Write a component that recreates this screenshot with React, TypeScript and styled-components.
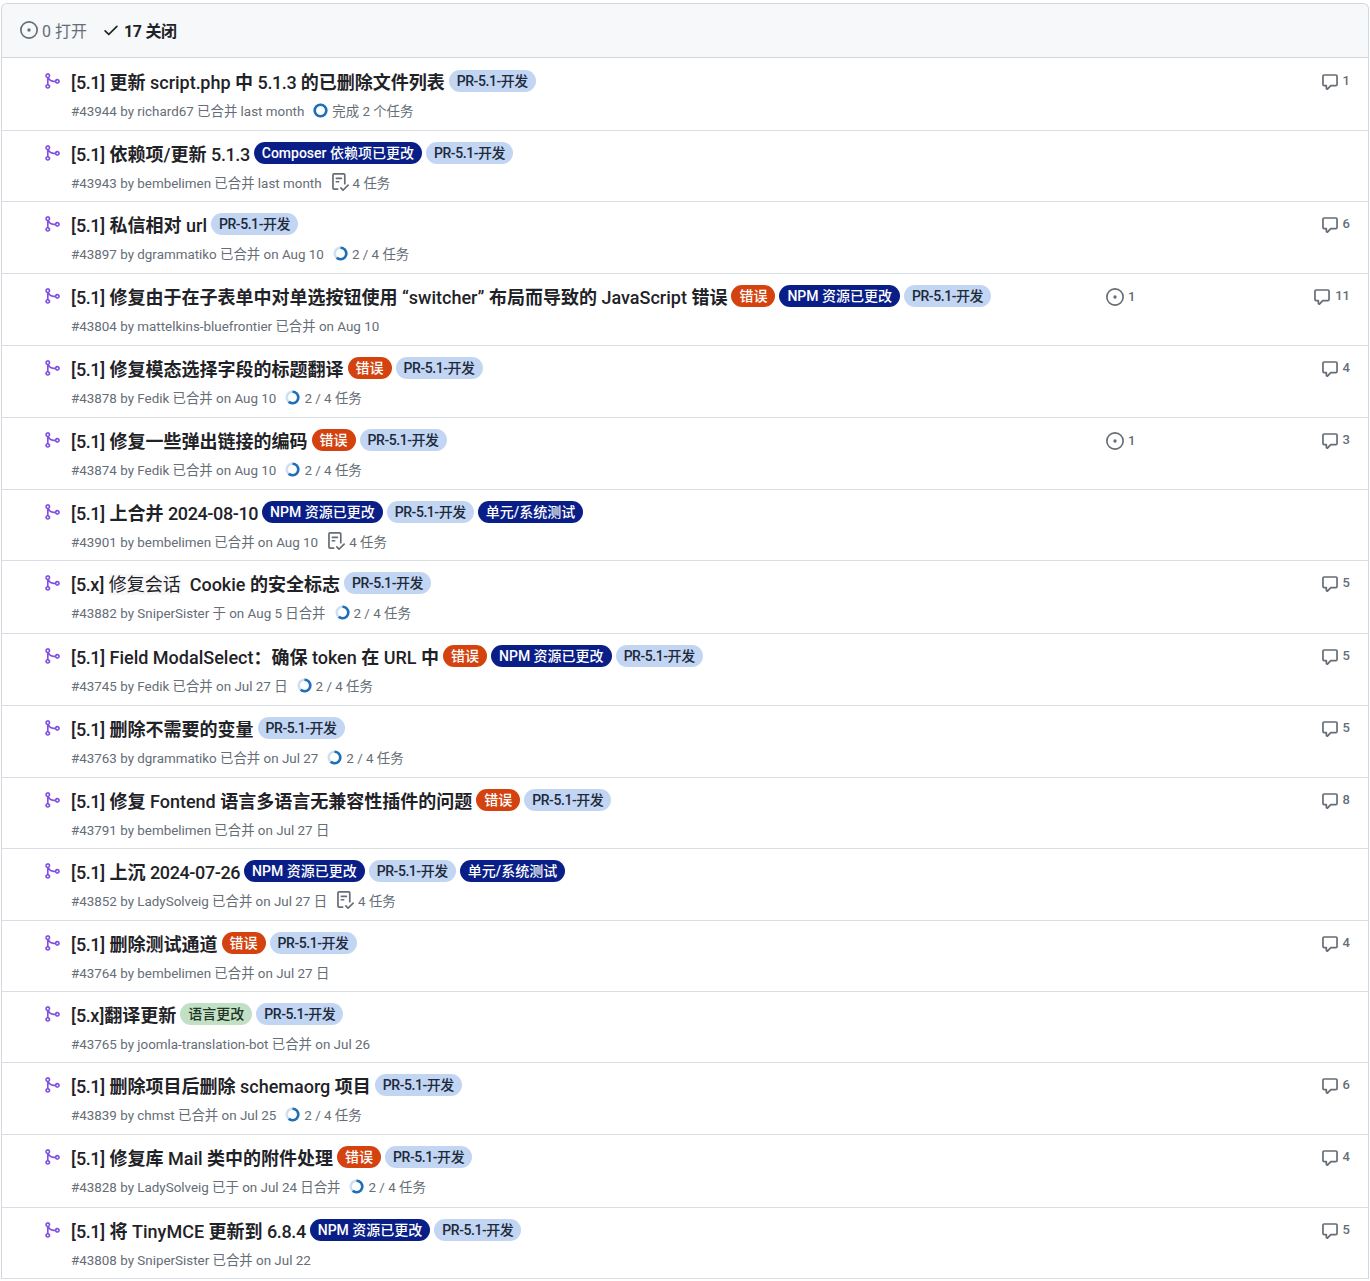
import React from "react";
import styled, { createGlobalStyle } from "styled-components";

type LabelKind = "pr" | "npm" | "bug" | "lang";

interface PullItem {
  title: string;
  labels: [string, LabelKind][];
  meta: string;
  task?: "done" | "list" | "progress";
  linked?: number;
  comments?: number;
  height: number;
}

const PR: [string, LabelKind] = ["PR-5.1-开发", "pr"];
const NPM: [string, LabelKind] = ["NPM 资源已更改", "npm"];
const BUG: [string, LabelKind] = ["错误", "bug"];
const TESTS: [string, LabelKind] = ["单元/系统测试", "npm"];

const pulls: PullItem[] = [
  { title: "[5.1] 更新 script.php 中 5.1.3 的已删除文件列表", labels: [PR], meta: "#43944 by richard67 已合并 last month", task: "done", comments: 1, height: 73 },
  { title: "[5.1] 依赖项/更新 5.1.3", labels: [["Composer 依赖项已更改", "npm"], PR], meta: "#43943 by bembelimen 已合并 last month", task: "list", height: 71 },
  { title: "[5.1] 私信相对 url", labels: [PR], meta: "#43897 by dgrammatiko 已合并 on Aug 10", task: "progress", comments: 6, height: 72 },
  { title: "[5.1] 修复由于在子表单中对单选按钮使用 “switcher” 布局而导致的 JavaScript 错误", labels: [BUG, NPM, PR], meta: "#43804 by mattelkins-bluefrontier 已合并 on Aug 10", linked: 1, comments: 11, height: 72 },
  { title: "[5.1] 修复模态选择字段的标题翻译", labels: [BUG, PR], meta: "#43878 by Fedik 已合并 on Aug 10", task: "progress", comments: 4, height: 72 },
  { title: "[5.1] 修复一些弹出链接的编码", labels: [BUG, PR], meta: "#43874 by Fedik 已合并 on Aug 10", task: "progress", linked: 1, comments: 3, height: 72 },
  { title: "[5.1] 上合并 2024-08-10", labels: [NPM, PR, TESTS], meta: "#43901 by bembelimen 已合并 on Aug 10", task: "list", height: 71 },
  { title: "[5.x] 修复会话  Cookie 的安全标志", labels: [PR], meta: "#43882 by SniperSister 于 on Aug 5 日合并", task: "progress", comments: 5, height: 73 },
  { title: "[5.1] Field ModalSelect：确保 token 在 URL 中", labels: [BUG, NPM, PR], meta: "#43745 by Fedik 已合并 on Jul 27 日", task: "progress", comments: 5, height: 72 },
  { title: "[5.1] 删除不需要的变量", labels: [PR], meta: "#43763 by dgrammatiko 已合并 on Jul 27", task: "progress", comments: 5, height: 72 },
  { title: "[5.1] 修复 Fontend 语言多语言无兼容性插件的问题", labels: [BUG, PR], meta: "#43791 by bembelimen 已合并 on Jul 27 日", comments: 8, height: 71 },
  { title: "[5.1] 上沉 2024-07-26", labels: [NPM, PR, TESTS], meta: "#43852 by LadySolveig 已合并 on Jul 27 日", task: "list", height: 72 },
  { title: "[5.1] 删除测试通道", labels: [BUG, PR], meta: "#43764 by bembelimen 已合并 on Jul 27 日", comments: 4, height: 71 },
  { title: "[5.x]翻译更新", labels: [["语言更改", "lang"], PR], meta: "#43765 by joomla-translation-bot 已合并 on Jul 26", height: 71 },
  { title: "[5.1] 删除项目后删除 schemaorg 项目", labels: [PR], meta: "#43839 by chmst 已合并 on Jul 25", task: "progress", comments: 6, height: 72 },
  { title: "[5.1] 修复库 Mail 类中的附件处理", labels: [BUG, PR], meta: "#43828 by LadySolveig 已于 on Jul 24 日合并", task: "progress", comments: 4, height: 73 },
  { title: "[5.1] 将 TinyMCE 更新到 6.8.4", labels: [NPM, PR], meta: "#43808 by SniperSister 已合并 on Jul 22", comments: 5, height: 71 },
];

const labelColors: Record<LabelKind, { bg: string; fg: string }> = {
  pr: { bg: "#c2d5f2", fg: "#1c2a3a" },
  npm: { bg: "#0a1e87", fg: "#ffffff" },
  bug: { bg: "#d4430f", fg: "#ffffff" },
  lang: { bg: "#c2e0c6", fg: "#1f3323" },
};

const Octicon = ({ d, size = 16, color }: { d: string; size?: number; color: string }) => (
  <svg width={size} height={size} viewBox="0 0 16 16" fill={color} style={{ flex: "none" }}>
    <path fillRule="evenodd" d={d} />
  </svg>
);

const mergeIcon =
  "M5.45 5.154A4.25 4.25 0 0 0 9.25 7.5h1.378a2.251 2.251 0 1 1 0 1.5H9.25A5.734 5.734 0 0 1 5 7.123v3.505a2.25 2.25 0 1 1-1.5 0V5.372a2.25 2.25 0 1 1 1.95-.218ZM4.25 13.5a.75.75 0 1 0 0-1.5.75.75 0 0 0 0 1.5Zm8.5-4.5a.75.75 0 1 0 0-1.5.75.75 0 0 0 0 1.5ZM5 3.25a.75.75 0 1 0 0 .005V3.25Z";
const issueIcon =
  "M8 9.5a1.5 1.5 0 1 0 0-3 1.5 1.5 0 0 0 0 3ZM8 0a8 8 0 1 1 0 16A8 8 0 0 1 8 0ZM1.5 8a6.5 6.5 0 1 0 13 0 6.5 6.5 0 0 0-13 0Z";
const checkIcon =
  "M13.78 4.22a.75.75 0 0 1 0 1.06l-7.25 7.25a.75.75 0 0 1-1.06 0L2.22 9.28a.751.751 0 0 1 .018-1.042.751.751 0 0 1 1.042-.018L6 10.94l6.72-6.72a.75.75 0 0 1 1.06 0Z";
const commentIcon =
  "M1 2.75C1 1.784 1.784 1 2.75 1h10.5c.966 0 1.75.784 1.75 1.75v7.5A1.75 1.75 0 0 1 13.25 12H9.06l-2.573 2.573A1.458 1.458 0 0 1 4 13.543V12H2.75A1.75 1.75 0 0 1 1 10.25Zm1.75-.25a.25.25 0 0 0-.25.25v7.5c0 .138.112.25.25.25h2a.75.75 0 0 1 .75.75v2.19l2.72-2.72a.749.749 0 0 1 .53-.22h4.5a.25.25 0 0 0 .25-.25v-7.5a.25.25 0 0 0-.25-.25Z";
const checklistIcon =
  "M2.5 1.75v11.5c0 .138.112.25.25.25h3.17a.75.75 0 0 1 0 1.5H2.75A1.75 1.75 0 0 1 1 13.25V1.75C1 .784 1.784 0 2.75 0h8.5C12.216 0 13 .784 13 1.75v7.736a.75.75 0 0 1-1.5 0V1.75a.25.25 0 0 0-.25-.25h-8.5a.25.25 0 0 0-.25.25Zm13.274 9.537v-.001l-4.557 4.45a.75.75 0 0 1-1.055-.008l-1.943-1.95a.75.75 0 0 1 1.062-1.058l1.419 1.425 4.026-3.932a.75.75 0 1 1 1.048 1.074ZM4.75 4h4.5a.75.75 0 0 1 0 1.5h-4.5a.75.75 0 0 1 0-1.5ZM4 7.75A.75.75 0 0 1 4.75 7h2a.75.75 0 0 1 0 1.5h-2A.75.75 0 0 1 4 7.75Z";

// ring for the task progress, arc is the filled share
const ProgressRing = ({ arc }: { arc: number }) => (
  <svg width="15" height="15" viewBox="0 0 15 15" style={{ flex: "none" }}>
    <circle cx="7.5" cy="7.5" r="5.8" fill="none" stroke="#cfe0f2" strokeWidth="2.6" />
    <circle
      cx="7.5"
      cy="7.5"
      r="5.8"
      fill="none"
      stroke="#1f6fb8"
      strokeWidth="2.6"
      strokeDasharray={`${arc * 36.44} 36.44`}
      transform="rotate(-90 7.5 7.5)"
    />
  </svg>
);

const GlobalStyle = createGlobalStyle`
  html, body {
    margin: 0;
    padding: 0;
    background: #ffffff;
  }

  body {
    font-family: Roboto, "Noto Sans CJK SC", sans-serif;
    color: #1f2328;
  }
`;

const Page = styled.div`
  padding: 3px 1px 2px 1px;
`;

const Box = styled.div`
  border: 1px solid #d0d7de;
  border-bottom: 0;
  border-radius: 6px 6px 0 0;
`;

const BoxHeader = styled.div`
  display: flex;
  align-items: center;
  box-sizing: border-box;
  height: 54px;
  padding: 0 0 2px 18px;
  gap: 15px;
  background: #f6f8fa;
  border-bottom: 1px solid #d0d7de;
  border-radius: 6px 6px 0 0;
  font-size: 16px;
`;

const StateTab = styled.span<{ $active?: boolean }>`
  display: inline-flex;
  align-items: center;
  gap: 4px;
  color: ${(p) => (p.$active ? "#1f2328" : "#656d76")};
  font-weight: ${(p) => (p.$active ? 700 : 400)};
  letter-spacing: ${(p) => (p.$active ? "-0.3px" : "0")};
`;

const Row = styled.div<{ $height: number }>`
  display: flex;
  box-sizing: border-box;
  height: ${(p) => p.$height}px;
  padding-top: 10px;
  border-bottom: 1px solid #d8dee4;

  &:nth-child(2) {
    padding-top: 11px;
  }
`;

const StateCell = styled.div`
  flex: none;
  width: 69px;
  padding: 3px 0 0 41px;
  box-sizing: border-box;
`;

const Main = styled.div`
  flex: 1;
  min-width: 0;
`;

const TitleLine = styled.div`
  display: flex;
  align-items: flex-start;
  height: 27px;
  gap: 4px;
`;

const Title = styled.span`
  font-size: 18px;
  line-height: 27px;
  font-weight: 500;
  color: #1f2328;
  white-space: pre;
`;

const Num = styled.span`
  letter-spacing: -0.4px;
`;

const Han = styled.span<{ $plain?: boolean }>`
  font-weight: ${(p) => (p.$plain ? 400 : 700)};
  background: ${(p) => (p.$plain ? "#f7f7f7" : "transparent")};
`;

const Label = styled.span<{ $kind: LabelKind }>`
  display: inline-block;
  height: 22px;
  line-height: 22px;
  margin-top: 1px;
  padding: 0 8px;
  border-radius: 11px;
  font-size: 14px;
  font-weight: 500;
  letter-spacing: ${(p) => (p.$kind === "pr" ? "-0.44px" : "0")};
  white-space: nowrap;
  background: ${(p) => labelColors[p.$kind].bg};
  color: ${(p) => labelColors[p.$kind].fg};
`;

const Meta = styled.div`
  display: flex;
  align-items: center;
  height: 20px;
  margin-top: 4px;
  font-size: 13.4px;
  color: #656d76;
  white-space: pre;
`;

const TaskInfo = styled.span`
  display: inline-flex;
  align-items: center;
  gap: 4px;
  margin-left: 9px;
`;

const LinkedCell = styled.div`
  flex: none;
  width: 30px;
  margin-right: 154px;
  padding-top: 4px;
  display: flex;
  gap: 4px;
  font-size: 13px;
  font-weight: 500;
  line-height: 18px;
  color: #656d76;
`;

const CommentCell = styled.div`
  flex: none;
  width: 60px;
  margin-right: 18px;
  padding-top: 4px;
  display: flex;
  justify-content: flex-end;
  gap: 4px;
  font-size: 13px;
  font-weight: 500;
  line-height: 16px;
  color: #656d76;
`;

const Spacer = styled.div`
  flex: none;
  width: 30px;
  margin-right: 154px;
`;

// latin runs keep the medium weight, digits run a bit tighter, chinese is bold
const latinParts = (text: string) =>
  text
    .split(/([\d.-]+)/)
    .map((part, idx) => (idx % 2 ? <Num key={idx}>{part}</Num> : part));

const TitleText = ({ text }: { text: string }) => (
  <Title>
    {text.split(/([\u4e00-\u9fff：]+)/).map((part, idx) =>
      idx % 2 ? (
        <Han key={idx} $plain={part === "修复会话"}>
          {part}
        </Han>
      ) : (
        <React.Fragment key={idx}>{latinParts(part)}</React.Fragment>
      )
    )}
  </Title>
);

const PullRow = ({ item }: { item: PullItem }) => (
  <Row $height={item.height}>
    <StateCell>
      <Octicon d={mergeIcon} color="#8250df" size={18} />
    </StateCell>
    <Main>
      <TitleLine>
        <TitleText text={item.title} />
        {item.labels.map(([text, kind]) => (
          <Label key={text} $kind={kind}>
            {text}
          </Label>
        ))}
      </TitleLine>
      <Meta>
        {item.meta}
        {item.task === "done" && (
          <TaskInfo>
            <ProgressRing arc={1} />
            完成 2 个任务
          </TaskInfo>
        )}
        {item.task === "list" && (
          <TaskInfo>
            <Octicon d={checklistIcon} color="#656d76" size={18} />
            4 任务
          </TaskInfo>
        )}
        {item.task === "progress" && (
          <TaskInfo>
            <ProgressRing arc={0.6} />
            2 / 4 任务
          </TaskInfo>
        )}
      </Meta>
    </Main>
    {item.linked ? (
      <LinkedCell>
        <Octicon d={issueIcon} color="#656d76" size={18} />
        {item.linked}
      </LinkedCell>
    ) : (
      <Spacer />
    )}
    <CommentCell>
      {item.comments !== undefined && (
        <>
          <Octicon d={commentIcon} color="#656d76" size={18} />
          {item.comments}
        </>
      )}
    </CommentCell>
  </Row>
);

export default function App() {
  return (
    <Page>
      <GlobalStyle />
      <Box>
        <BoxHeader>
          <StateTab>
            <Octicon d={issueIcon} color="#656d76" size={18} />0 打开
          </StateTab>
          <StateTab $active>
            <Octicon d={checkIcon} color="#1f2328" size={18} />
            17 关闭
          </StateTab>
        </BoxHeader>
        {pulls.map((item) => (
          <PullRow key={item.meta} item={item} />
        ))}
      </Box>
    </Page>
  );
}
